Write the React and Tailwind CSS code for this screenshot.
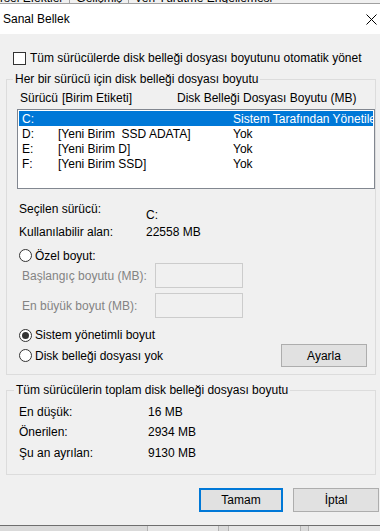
import React from 'react';

const drives = [
  { letter: 'C:', label: '', size: 'Sistem Tarafından Yönetilen', selected: true },
  { letter: 'D:', label: '[Yeni Birim  SSD ADATA]', size: 'Yok' },
  { letter: 'E:', label: '[Yeni Birim D]', size: 'Yok' },
  { letter: 'F:', label: '[Yeni Birim SSD]', size: 'Yok' },
];

const totals = [
  { label: 'En düşük:', value: '16 MB' },
  { label: 'Önerilen:', value: '2934 MB' },
  { label: 'Şu an ayrılan:', value: '9130 MB' },
];

function Radio({ checked }) {
  return (
    <span className="flex h-[13px] w-[13px] shrink-0 items-center justify-center rounded-full border border-[#333333] bg-white">
      {checked && <span className="h-[7px] w-[7px] rounded-full bg-[#333333]" />}
    </span>
  );
}

export default function App() {
  return (
    <div className="flex h-[531px] w-[380px] flex-col overflow-hidden bg-[#f0f0f0] font-['Liberation_Sans',Arial,sans-serif] text-[12px] leading-[16px] text-black">
      {/* tab strip of the parent window, mostly hidden */}
      <div className="flex h-[4px] shrink-0 overflow-hidden border-b border-[#a0a0a0] bg-[#f0f0f0]">
        <div className="-mt-[9px] flex leading-[14px] whitespace-nowrap">
          <span className="-ml-[16px] pr-[6px]">Görsel Efektler</span>
          <span className="border-l border-[#a0a0a0] px-[6px]">Gelişmiş</span>
          <span className="border-l border-[#a0a0a0] pl-[5px] pr-[10px]">Veri Yürütme Engellemesi</span>
        </div>
      </div>

      {/* title bar */}
      <div className="flex h-[30px] shrink-0 items-center justify-between bg-white pl-[3px] pr-[2px]">
        <span>Sanal Bellek</span>
        <svg width="11" height="11" viewBox="0 0 11 11" className="mr-[1px]">
          <path d="M0.5 0.5 L10.5 10.5 M10.5 0.5 L0.5 10.5" stroke="#000" strokeWidth="1" />
        </svg>
      </div>

      <div className="flex flex-1 flex-col">
        <label className="mt-[16px] flex h-[16px] items-center gap-[4px] pl-[13px]">
          <span className="h-[13px] w-[13px] shrink-0 border border-[#333333] bg-white" />
          <span>Tüm sürücülerde disk belleği dosyası boyutunu otomatik yönet</span>
        </label>

        <fieldset className="ml-[6px] mt-[5px] w-[370px] border border-[#dcdcdc] pb-[7px]">
          <legend className="ml-[6px] px-[2px]">Her bir sürücü için disk belleği dosyası boyutu</legend>

          <div className="mt-[3px] flex h-[16px] items-center pl-[13px] whitespace-nowrap">
            <span className="w-[42px] shrink-0">Sürücü</span>
            <span className="w-[115px] shrink-0">[Birim Etiketi]</span>
            <span className="shrink-0">Disk Belleği Dosyası Boyutu (MB)</span>
          </div>

          <div className="ml-[10px] mt-[3px] h-[80px] w-[358px] overflow-hidden border border-[#828790] bg-white p-[1px]">
            {drives.map((d) => (
              <div
                key={d.letter}
                className={`flex h-[15px] items-center pl-[3px] whitespace-pre ${d.selected ? 'bg-[#0078d7] text-white' : ''}`}
              >
                <span className="w-[36px] shrink-0">{d.letter}</span>
                <span className="w-[175px] shrink-0">{d.label}</span>
                <span className="shrink-0">{d.size}</span>
              </div>
            ))}
          </div>

          <div className="mt-[12px] flex items-start pl-[12px]">
            <span className="w-[127px] shrink-0">Seçilen sürücü:</span>
            <span className="mt-[6px]">C:</span>
          </div>
          <div className="mt-[1px] flex pl-[12px]">
            <span className="w-[127px] shrink-0">Kullanılabilir alan:</span>
            <span>22558 MB</span>
          </div>

          <label className="mt-[8px] flex h-[15px] items-center gap-[3px] pl-[12px]">
            <Radio />
            <span>Özel boyut:</span>
          </label>

          <div className="flex items-center pl-[15px] text-[#838383]">
            <span className="w-[133px] shrink-0">Başlangıç boyutu (MB):</span>
            <span className="h-[25px] w-[88px] border border-[#cccccc] bg-[#f0f0f0]" />
          </div>
          <div className="mt-[5px] flex items-center pl-[15px] text-[#838383]">
            <span className="w-[133px] shrink-0">En büyük boyut (MB):</span>
            <span className="h-[25px] w-[88px] border border-[#cccccc] bg-[#f0f0f0]" />
          </div>

          <label className="mt-[9px] flex h-[16px] items-center gap-[3px] pl-[12px]">
            <Radio checked />
            <span>Sistem yönetimli boyut</span>
          </label>

          <div className="mt-[1px] flex h-[23px] items-center pl-[12px]">
            <label className="flex items-center gap-[3px]">
              <Radio />
              <span>Disk belleği dosyası yok</span>
            </label>
            <button className="ml-auto mr-[8px] h-[23px] w-[86px] border border-[#adadad] bg-[#e1e1e1]">
              Ayarla
            </button>
          </div>
        </fieldset>

        <fieldset className="ml-[6px] mt-[7px] w-[370px] border border-[#dcdcdc] pb-[13px]">
          <legend className="ml-[7px] px-[2px]">Tüm sürücülerin toplam disk belleği dosyası boyutu</legend>
          {totals.map((t, i) => (
            <div
              key={t.label}
              className={`flex h-[16px] items-center pl-[12px] ${i === 0 ? 'mt-[6px]' : i === 1 ? 'mt-[4px]' : 'mt-[5px]'}`}
            >
              <span className="w-[129px] shrink-0">{t.label}</span>
              <span>{t.value}</span>
            </div>
          ))}
        </fieldset>

        <div className="mt-[13px] flex justify-end gap-[10px] pr-[1px]">
          <button className="h-[24px] w-[84px] border-2 border-[#0078d7] bg-[#e1e1e1]">Tamam</button>
          <button className="h-[24px] w-[86px] border border-[#adadad] bg-[#e1e1e1]">İptal</button>
        </div>
      </div>

      {/* parent window behind, lower edge */}
      <div className="flex h-[6px] shrink-0 border-t border-[#6e6e6e] bg-[#dadada]">
        <span className="ml-[147px] w-[72px] border-l border-r border-[#b4b4b4] bg-[#e6e6e6]" />
        <span className="ml-[9px] w-[73px] border-l border-r border-[#b4b4b4] bg-[#e6e6e6]" />
        <span className="ml-[7px] flex-1 border-l border-[#b4b4b4] bg-[#e6e6e6]" />
      </div>
    </div>
  );
}
